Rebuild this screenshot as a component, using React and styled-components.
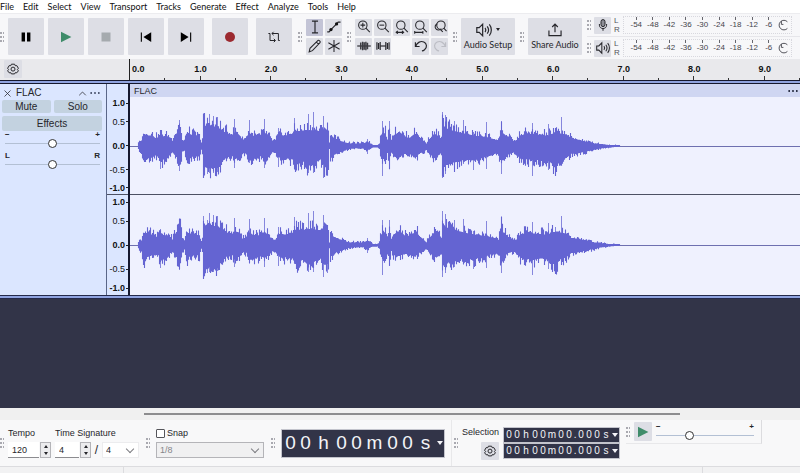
import React from 'react'
import styled, { createGlobalStyle } from 'styled-components'

const menuItems = [
  'File',
  'Edit',
  'Select',
  'View',
  'Transport',
  'Tracks',
  'Generate',
  'Effect',
  'Analyze',
  'Tools',
  'Help',
]
const seconds = ['1.0', '2.0', '3.0', '4.0', '5.0', '6.0', '7.0', '8.0', '9.0']
const levels = ['-54', '-48', '-42', '-36', '-30', '-24', '-18', '-12', '-6']
const amplitudes = ['1.0', '0.5', '0.0', '-0.5', '-1.0']

// [x, height above the zero line, height below it]
const envelope = [
  [8, 3, 3], [9, 6, 6], [11, 5, 7], [13, 14, 17], [15, 13, 18], [17, 12, 14],
  [22, 12, 12], [25, 9, 10], [28, 10, 12], [30, 14, 18], [33, 11, 16],
  [37, 11, 14], [40, 9, 9], [42, 6, 6], [44, 12, 10], [46, 14, 10],
  [48, 23, 23], [50, 21, 22], [52, 6, 6], [54, 5, 5], [56, 14, 17],
  [60, 13, 13], [66, 12, 12], [69, 10, 12], [71, 4, 4], [72, 8, 8],
  [73, 27, 29], [75, 22, 25], [78, 25, 27], [82, 22, 27], [88, 21, 25],
  [92, 17, 18], [97, 14, 13], [102, 13, 12], [105, 16, 15], [109, 12, 14],
  [112, 7, 7], [116, 9, 9], [118, 15, 18], [122, 12, 14], [126, 11, 16],
  [130, 11, 12], [134, 15, 16], [138, 11, 12], [142, 6, 7], [145, 6, 7],
  [148, 12, 12], [152, 12, 16], [156, 12, 14], [162, 14, 16], [166, 17, 22],
  [172, 17, 18], [178, 18, 24], [184, 18, 20], [190, 16, 16], [194, 20, 24],
  [198, 17, 22], [199, 3, 3], [200, 12, 14], [202, 10, 12], [206, 8, 8],
  [212, 5, 6], [218, 3, 3], [225, 3, 2], [233, 3, 2], [237, 5, 5],
  [240, 3, 2], [243, 1, 1], [247, 1, 1], [249, 3, 3], [250, 9, 10],
  [252, 15, 15], [255, 14, 16], [257, 7, 7], [259, 20, 18], [261, 7, 6],
  [263, 12, 12], [269, 16, 13], [274, 11, 9], [279, 9, 9], [282, 12, 11],
  [286, 14, 12], [290, 9, 8], [293, 6, 6], [296, 3, 4], [299, 8, 9],
  [304, 14, 14], [308, 11, 10], [311, 8, 8], [312, 28, 28], [314, 21, 20],
  [320, 18, 21], [328, 16, 18], [334, 14, 16], [342, 12, 17], [350, 11, 15],
  [357, 10, 12], [362, 8, 10], [368, 6, 8], [371, 20, 20], [373, 14, 14],
  [378, 9, 9], [383, 6, 7], [386, 6, 10], [390, 12, 15], [398, 14, 16],
  [404, 13, 17], [412, 12, 16], [418, 12, 18], [425, 15, 24], [430, 14, 17],
  [436, 13, 14], [441, 8, 9], [448, 7, 8], [456, 5, 6], [464, 3, 4],
  [472, 2, 2], [480, 1, 1], [490, 1, 0],
]
const peaks = [
  [30, 16, 23], [49, 26, 25], [73, 29, 31], [77, 25, 28], [79, 32, 27],
  [83, 30, 27], [87, 29, 26], [104, 27, 22], [119, 26, 17], [134, 27, 22],
  [148, 18, 21], [164, 28, 19], [178, 32, 27], [183, 34, 27], [193, 30, 32],
  [197, 20, 28], [237, 7, 8], [252, 25, 30], [259, 25, 21], [312, 34, 32],
  [315, 31, 28], [324, 25, 22], [333, 26, 18], [343, 14, 24], [356, 24, 23],
  [371, 25, 28], [402, 23, 30], [418, 22, 24], [425, 18, 29], [431, 29, 18],
]

const noise = (x, seed) => {
  const n = Math.sin(x * 12.9898 + seed * 78.233) * 43758.5453
  return n - Math.floor(n)
}

const buildWave = (seed) => {
  let path = ''
  for (let i = 0; i < envelope.length - 1; i++) {
    const [x1, up1, down1] = envelope[i]
    const [x2, up2, down2] = envelope[i + 1]
    for (let x = x1; x < x2; x++) {
      const t = (x - x1) / (x2 - x1)
      const up = up1 + (up2 - up1) * t
      const down = down1 + (down2 - down1) * t
      const top = up * (0.88 + noise(x, seed) ** 3 * 0.6)
      const bottom = down * (0.8 + noise(x, seed + 1) ** 2 * 0.5)
      path += `M${x + 0.5} ${(50 - top).toFixed(1)}V${(50.6 + bottom).toFixed(1)}`
    }
  }
  return path
}
const peakPath = peaks
  .map(([x, up, down]) => `M${x + 0.5} ${50 - up}V${50 + down}`)
  .join('')

const Icon = ({ size = 12, children, ...rest }) => (
  <svg
    width={size}
    height={size}
    viewBox='0 0 12 12'
    fill='none'
    stroke='#26262b'
    strokeWidth='1'
    aria-hidden='true'
    {...rest}
  >
    {children}
  </svg>
)

const PauseIcon = () => (
  <Icon fill='#000' stroke='none'>
    <path d='M1.6 1.5h3.4v9H1.6zM7 1.5h3.4v9H7z' />
  </Icon>
)
const PlayIcon = ({ size }) => (
  <Icon size={size} fill='#3f8c6a' stroke='none'>
    <path d='M1 .8v10.4L11.4 6z' />
  </Icon>
)
const StopIcon = () => (
  <Icon fill='#a5aaae' stroke='none'>
    <path d='M1.5 1.5h9v9h-9z' />
  </Icon>
)
const StartIcon = () => (
  <Icon fill='#000' stroke='none'>
    <path d='M.8 1.4h1.1v9.4H.8zM11.2 1.2v9.8L3.4 6z' />
  </Icon>
)
const EndIcon = () => (
  <Icon fill='#000' stroke='none'>
    <path d='M10.1 1.4h1.1v9.4h-1.1zM.8 1.2v9.8L8.6 6z' />
  </Icon>
)
const RecordIcon = () => (
  <Icon fill='#9c2a30' stroke='none'>
    <circle cx='6' cy='6' r='5' />
  </Icon>
)
const LoopIcon = () => (
  <Icon>
    <path d='M.4 2.5h1.6v7h5M4 2.5h6.4v7h1.4' />
    <path d='M5.6.8 3.9 2.5l1.7 1.7M5.8 7.8l1.7 1.7-1.7 1.7' />
  </Icon>
)
const CursorIcon = () => (
  <Icon size={14}>
    <path d='M3.4 1h5.2M6 1v10M3.4 11h5.2' />
  </Icon>
)
const EnvelopeIcon = () => (
  <Icon size={14}>
    <path d='M.2 10.2h1.6L3.6 8 8 3.6l1.6-1.8h2' />
    <circle cx='3.4' cy='8.2' r='1.4' fill='#111' stroke='none' />
    <circle cx='8.2' cy='3.4' r='1.4' fill='#111' stroke='none' />
  </Icon>
)
const PencilIcon = () => (
  <Icon size={14} strokeWidth='.9'>
    <path d='M1 11l.7-3L8.4 1.3c.9-.8 2.7.9 1.9 1.9L3.8 10zM7.2 2.6l1.9 1.9' />
  </Icon>
)
const StarIcon = () => (
  <Icon size={14} strokeWidth='.9'>
    <path d='M6 .8v10.4M1.2 3.2l9.6 5.6M10.8 3.2 1.2 8.8' />
  </Icon>
)
const ZoomIcon = ({ kind }) => (
  <Icon size={14} strokeWidth='.9'>
    {kind === 'toggle' && <path d='M3.6 3.2a2.8 2.8 0 1 0 3 4.6' />}
    <circle cx={kind === 'toggle' ? 6.8 : 5} cy='4.4' r='3.6' />
    <path d={kind === 'toggle' ? 'M9.2 7l2.4 2.6M6.4 8.2l2 2' : 'M7.6 7l3.4 3.4'} />
    {kind === 'in' && <path d='M3 4.4h4M5 2.4v4' />}
    {kind === 'out' && <path d='M3 4.4h4' />}
    {kind === 'selection' && (
      <path d='M1 10.6h6.4M2.4 9.4 1 10.6l1.4 1.2M6 9.4l1.4 1.2L6 11.8' />
    )}
    {kind === 'fit' && <path d='M.6 10.6h7M.6 9.4v2.4M7.6 9.4v2.4' />}
  </Icon>
)
const TrimIcon = () => (
  <Icon size={14}>
    <path d='M.2 6h11.6' />
    <path d='M3.2 3v6M4.8 2.4v7.2M6.2 2.8v6.4M7.6 2.4v7.2M9 3.2v5.6' stroke='#3c3c42' strokeWidth='1.2' />
  </Icon>
)
const SilenceIcon = () => (
  <Icon size={14}>
    <path d='M3.6 6h4.8' />
    <path d='M.8 2.8v6.4M2.2 3.4v5.2M3.6 2.6v6.8M8.4 2.6v6.8M9.8 3.4v5.2M11.2 2.8v6.4' />
  </Icon>
)
const UndoIcon = ({ color = '#26262b', flip }) => (
  <Icon size={14} stroke={color}>
    <g transform={flip ? 'matrix(-1 0 0 1 12 0)' : undefined}>
      <path d='M1.2 2.8v3.6h3.6M1.4 6.2C2.8 2.8 5.8 1.4 8.4 2.6c2.6 1.2 3.2 4.6.6 6.6-.6.6-1.4.9-2.2 1' />
    </g>
  </Icon>
)
const SpeakerIcon = ({ size = 14 }) => (
  <Icon size={size} strokeWidth='.9'>
    <path d='M.6 4.2v3.6h1.8l2.6 2.6V1.6L2.4 4.2zM6.8 4.4c.6.8.6 2.4 0 3.2M8.4 3.2c1.2 1.6 1.2 4 0 5.6M10 1.8c2 2.4 2 6 0 8.4' />
  </Icon>
)
const ShareIcon = () => (
  <Icon size={14}>
    <path d='M.8 6.4v4.4h10.4V6.4M6 8V1M3.6 3.4 6 1l2.4 2.4' />
  </Icon>
)
const MicIcon = () => (
  <Icon>
    <rect x='4' y='.6' width='4' height='7' rx='2' fill='#8d8e96' />
    <path d='M2.4 5v1.2c0 4.4 7.2 4.4 7.2 0V5M6 9.4v2.4' />
  </Icon>
)
const GearIcon = () => (
  <Icon>
    <path d='M4.4 1.2h3.2l.6 1.5 1.6-.1 1.6 2.7-1 1.2 1 1.3-1.6 2-1.6-.1-.6 1.2H4.4l-.6-1.2-1.6.1-1.6-2 1-1.3-1-1.2 1.6-2.7 1.6.1z' />
    <circle cx='6' cy='6.1' r='2' />
  </Icon>
)
const CloseIcon = () => (
  <Icon size={9}>
    <path d='M2 2l8 8M10 2l-8 8' />
  </Icon>
)
const CollapseIcon = () => (
  <Icon size={9}>
    <path d='M1.6 8.4 6 4l4.4 4.4' />
  </Icon>
)
const DotsIcon = ({ color = '#3b4560' }) => (
  <Icon size={10} fill={color} stroke='none'>
    <circle cx='1.4' cy='6' r='1.1' />
    <circle cx='6' cy='6' r='1.1' />
    <circle cx='10.6' cy='6' r='1.1' />
  </Icon>
)
const RingIcon = () => (
  <Icon stroke='#55555c'>
    <path d='M10.4 2.8A4.8 4.8 0 1 0 10.4 9.4M4.4 2v3.4h2' />
  </Icon>
)

const Waveform = ({ seed }) => (
  <Wave viewBox='0 0 670 100' preserveAspectRatio='none' role='img' aria-label='Waveform'>
    <path d='M0 50.5H670' stroke='#6e70b0' />
    <path d={peakPath} stroke='#6464d2' opacity='0.75' />
    <path d={buildWave(seed)} stroke='#6464d2' strokeWidth='1.1' />
  </Wave>
)

const TimeText = ({ value, large }) => (
  <TimeBox $large={large}>
    {value.split('').map((char, index) => (
      <TimeCell key={index} $large={large} $char={char}>
        {char}
      </TimeCell>
    ))}
    <TimeMenu type='button' aria-label='Time format'>
      <Arrow />
    </TimeMenu>
  </TimeBox>
)

const Meter = ({ label, icon }) => (
  <MeterRow>
    <Grip />
    <ToolButton type='button' aria-label={label}>
      {icon}
    </ToolButton>
    <Channels>
      <span>L</span>
      <span>R</span>
    </Channels>
    <Scale>
      {levels.map((level) => (
        <Level key={level}>{level}</Level>
      ))}
      <LevelEnd>
        <RingIcon />
      </LevelEnd>
    </Scale>
  </MeterRow>
)

const Spinner = ({ id, value, width }) => (
  <SpinBox>
    <NumberInput id={id} defaultValue={value} $width={width} />
    <SpinButtons>
      <button type='button' aria-label='Increase'>
        <Arrow $up />
      </button>
      <button type='button' aria-label='Decrease'>
        <Arrow />
      </button>
    </SpinButtons>
  </SpinBox>
)

const App = () => {
  return (
    <Page>
      <GlobalStyle />
      <Menu>
        {menuItems.map((item) => (
          <button type='button' key={item}>
            {item}
          </button>
        ))}
      </Menu>

      <Toolbar>
        <Group>
          <Grip />
          <Transport>
            <BigButton type='button' aria-label='Pause'><PauseIcon /></BigButton>
            <BigButton type='button' aria-label='Play'><PlayIcon /></BigButton>
            <BigButton type='button' aria-label='Stop'><StopIcon /></BigButton>
            <BigButton type='button' aria-label='Skip to start'><StartIcon /></BigButton>
            <BigButton type='button' aria-label='Skip to end'><EndIcon /></BigButton>
            <BigButton type='button' aria-label='Record' $apart><RecordIcon /></BigButton>
            <BigButton type='button' aria-label='Loop' $apart><LoopIcon /></BigButton>
          </Transport>
        </Group>
        <Group>
          <Grip />
          <ToolGrid $columns={2}>
            <ToolButton type='button' aria-label='Selection tool' $active><CursorIcon /></ToolButton>
            <ToolButton type='button' aria-label='Envelope tool'><EnvelopeIcon /></ToolButton>
            <ToolButton type='button' aria-label='Draw tool'><PencilIcon /></ToolButton>
            <ToolButton type='button' aria-label='Multi-tool'><StarIcon /></ToolButton>
          </ToolGrid>
        </Group>
        <Group>
          <Grip />
          <ToolGrid $columns={5}>
            <ToolButton type='button' aria-label='Zoom in'><ZoomIcon kind='in' /></ToolButton>
            <ToolButton type='button' aria-label='Zoom out'><ZoomIcon kind='out' /></ToolButton>
            <ToolButton type='button' aria-label='Fit selection'><ZoomIcon kind='selection' /></ToolButton>
            <ToolButton type='button' aria-label='Fit project'><ZoomIcon kind='fit' /></ToolButton>
            <ToolButton type='button' aria-label='Zoom toggle'><ZoomIcon kind='toggle' /></ToolButton>
            <ToolButton type='button' aria-label='Trim audio'><TrimIcon /></ToolButton>
            <ToolButton type='button' aria-label='Silence audio'><SilenceIcon /></ToolButton>
            <span />
            <ToolButton type='button' aria-label='Undo'><UndoIcon /></ToolButton>
            <ToolButton type='button' aria-label='Redo'><UndoIcon flip color='#bcbdc4' /></ToolButton>
          </ToolGrid>
        </Group>
        <Group>
          <Grip />
          <LabelButton type='button'>
            <IconLine>
              <SpeakerIcon size={16} />
              <Arrow />
            </IconLine>
            Audio Setup
          </LabelButton>
        </Group>
        <Group>
          <Grip />
          <LabelButton type='button'>
            <IconLine>
              <ShareIcon />
            </IconLine>
            Share Audio
          </LabelButton>
        </Group>
        <Meters>
          <Meter label='Record meter' icon={<MicIcon />} />
          <Meter label='Playback meter' icon={<SpeakerIcon />} />
        </Meters>
      </Toolbar>

      <Timeline>
        <TimelineOptions>
          <OptionsButton type='button' aria-label='Timeline options'>
            <GearIcon />
          </OptionsButton>
        </TimelineOptions>
        <TimeRuler>
          <RulerLabels>
            <span>0.0</span>
            {seconds.map((second) => (
              <RulerLabel key={second}>{second}</RulerLabel>
            ))}
          </RulerLabels>
          <RulerTicks>
            {Array.from({ length: 19 }, (_, index) => (
              <Tick key={index} $major={index % 2 === 1} />
            ))}
          </RulerTicks>
        </TimeRuler>
      </Timeline>

      <Track>
        <TrackPanel>
          <TrackTitle>
            <IconButton type='button' aria-label='Close track'><CloseIcon /></IconButton>
            <TrackName>FLAC</TrackName>
            <IconButton type='button' aria-label='Collapse track'><CollapseIcon /></IconButton>
            <IconButton type='button' aria-label='Track menu'><DotsIcon /></IconButton>
          </TrackTitle>
          <TrackButtons>
            <TrackButton type='button'>Mute</TrackButton>
            <TrackButton type='button'>Solo</TrackButton>
            <TrackButton type='button' $wide>Effects</TrackButton>
          </TrackButtons>
          <SliderBox>
            <SliderEnds>
              <span>−</span>
              <span>+</span>
            </SliderEnds>
            <Slider type='range' aria-label='Gain' defaultValue='50' />
          </SliderBox>
          <SliderBox>
            <SliderEnds>
              <span>L</span>
              <span>R</span>
            </SliderEnds>
            <Slider type='range' aria-label='Pan' defaultValue='50' />
          </SliderBox>
        </TrackPanel>
        <AmplitudeRulers>
          {[97, 101].map((height) => (
            <Amplitude key={height} $height={height}>
              {amplitudes.map((amplitude) => (
                <AmplitudeLabel key={amplitude} $minor={amplitude.endsWith('.5')}>
                  {amplitude}
                </AmplitudeLabel>
              ))}
            </Amplitude>
          ))}
        </AmplitudeRulers>
        <Clip>
          <ClipTitle>
            FLAC
            <IconButton type='button' aria-label='Clip menu'><DotsIcon color='#11162b' /></IconButton>
          </ClipTitle>
          <Channel $height={97}>
            <Waveform seed={3} />
          </Channel>
          <Channel $height={101}>
            <Waveform seed={8} />
          </Channel>
        </Clip>
      </Track>

      <Canvas />
      <ScrollArea>
        <span />
        <ScrollThumb />
        <span />
      </ScrollArea>

      <BottomBar>
        <Grip />
        <Field>
          <label htmlFor='tempo'>Tempo</label>
          <Spinner id='tempo' value='120' width={31} />
        </Field>
        <Field>
          <label htmlFor='upper'>Time Signature</label>
          <FieldRow>
            <Spinner id='upper' value='4' width={24} />
            <Slash>/</Slash>
            <SelectBox $width={37}>
              <select aria-label='Lower time signature' defaultValue='4'>
                <option>4</option>
              </select>
            </SelectBox>
          </FieldRow>
        </Field>
        <BottomGroup>
          <Grip />
          <Field>
            <SnapLabel>
              <input type='checkbox' />
              Snap
            </SnapLabel>
            <SelectBox $width={108} $disabled>
              <select aria-label='Snap to' defaultValue='1/8' disabled>
                <option>1/8</option>
              </select>
            </SelectBox>
          </Field>
        </BottomGroup>
        <BottomGroup>
          <Grip />
          <ClockBox>
            <TimeText value='00h00m00s' large />
          </ClockBox>
        </BottomGroup>
        <SelectionGroup>
          <Grip />
          <SelectionHead>
            Selection
            <OptionsButton type='button' aria-label='Selection options'>
              <GearIcon />
            </OptionsButton>
          </SelectionHead>
          <SelectionTimes>
            <TimeText value='00h00m00.000s' />
            <TimeText value='00h00m00.000s' />
          </SelectionTimes>
        </SelectionGroup>
        <SpeedGroup>
          <Grip />
          <SpeedButton type='button' aria-label='Play at speed'>
            <PlayIcon />
          </SpeedButton>
          <SpeedSlider>
            <SliderEnds>
              <span>−</span>
              <span>+</span>
            </SliderEnds>
            <Slider type='range' aria-label='Playback speed' defaultValue='32' />
          </SpeedSlider>
        </SpeedGroup>
      </BottomBar>
      <StatusBar>
        <span />
        <span />
      </StatusBar>
    </Page>
  )
}

const GlobalStyle = createGlobalStyle`
  * {
    box-sizing: border-box;
  }
  body {
    margin: 0;
  }
  button, input, select {
    margin: 0;
    padding: 0;
    border: 0;
    border-radius: 0;
    background: none;
    color: inherit;
    font: inherit;
  }
  svg {
    display: block;
    flex: none;
  }
`

const Page = styled.main`
  display: flex;
  flex-direction: column;
  min-height: 100vh;
  overflow: hidden;
  background: #f7f7f9;
  color: #26262b;
  font-family: 'Liberation Sans', Arial, sans-serif;
  font-size: 9px;
  line-height: 10px;
`

const Menu = styled.nav`
  display: flex;
  gap: 9px;
  height: 13px;
  background: #fff;
  color: #111;
  font-family: Lato, sans-serif;
  font-size: 9px;
  line-height: 12px;
`

const Toolbar = styled.div`
  display: flex;
  gap: 5px;
  height: 46px;
  border-top: 1px solid #ececef;
`

const Group = styled.div`
  display: flex;
  align-items: center;
  gap: 4px;
`

const Grip = styled.span`
  flex: none;
  width: 4px;
  height: 10px;
  background: radial-gradient(circle at 1px 1px, #a9a9b0 1px, transparent 1px);
  background-size: 3px 4px;
`

const Transport = styled.div`
  display: flex;
  gap: 4px;
  padding-right: 1px;
`

const Button = styled.button`
  display: flex;
  align-items: center;
  justify-content: center;
  background: #dddee5;
  border-radius: 1px;
`

const BigButton = styled(Button)`
  width: 36px;
  height: 37px;
  margin-left: ${(props) => (props.$apart ? '4px' : '0')};
`

const ToolGrid = styled.div`
  display: grid;
  grid-template-columns: repeat(${(props) => props.$columns}, 17px);
  gap: 2px;
`

const ToolButton = styled(Button)`
  flex: none;
  width: 17px;
  height: 17px;
  background: ${(props) => (props.$active ? '#c3c4d6' : '#dddee5')};
`

const LabelButton = styled(Button)`
  flex-direction: column;
  gap: 2px;
  width: 54px;
  height: 37px;
  padding-bottom: 2px;
  font-family: Lato, sans-serif;
  font-size: 9px;
  white-space: nowrap;
`

const IconLine = styled.span`
  display: flex;
  align-items: center;
  gap: 4px;
  height: 16px;
`

const Arrow = styled.i`
  border: 2px solid transparent;
  border-top: 3px solid currentColor;
  border-bottom: 0;
  transform: ${(props) => (props.$up ? 'rotate(180deg)' : 'none')};
`

const Meters = styled.div`
  display: flex;
  flex: 1;
  flex-direction: column;
`

const MeterRow = styled.div`
  display: flex;
  flex: 1;
  align-items: center;
  gap: 3px;
  padding-right: 8px;

  & + & {
    border-top: 1px solid #e6e6ea;
  }
`

const Channels = styled.span`
  display: flex;
  flex-direction: column;
  width: 6px;
  color: #55555c;
  font-size: 8px;
  line-height: 9px;
`

const Scale = styled.div`
  display: grid;
  flex: 1;
  grid-template-columns: repeat(9, 1fr) 14px;
  height: 18px;
  padding-left: 4px;
  border: 1px dotted #d8d8de;
  color: #44444b;
  font-size: 8px;
  line-height: 10px;
`

const Level = styled.span`
  padding-top: 3px;
  background: linear-gradient(#66666c, #66666c) top center / 1px 3px no-repeat;
  text-align: center;
`

const LevelEnd = styled.span`
  display: flex;
  align-items: center;
`

const Timeline = styled.div`
  display: flex;
  height: 21px;
  background: #e9e9ec;
`

const TimelineOptions = styled.div`
  width: 130px;
  padding: 1px 4px;
  border-right: 1px solid #222;
`

const OptionsButton = styled(Button)`
  width: 18px;
  height: 18px;
`

const TimeRuler = styled.div`
  display: flex;
  flex: 1;
  flex-direction: column;
  justify-content: space-between;
  padding-top: 5px;
`

const RulerLabels = styled.div`
  display: grid;
  grid-template-columns: repeat(19, 1fr);
  color: #111;
  font-weight: bold;

  span:first-child {
    padding-left: 2px;
  }
`

const RulerLabel = styled.span`
  grid-column: span 2;
  text-align: center;
`

const RulerTicks = styled.div`
  display: grid;
  grid-template-columns: repeat(19, 1fr);
  align-items: end;
`

const Tick = styled.i`
  height: ${(props) => (props.$major ? '4px' : '2px')};
  border-right: 1px solid #333;
`

const Track = styled.section`
  display: flex;
  border-top: 4px double #15182e;
  border-bottom: 4px double #24294a;
  background: #8fa3e0;
`

const TrackPanel = styled.div`
  width: 107px;
  padding: 2px 4px 0 2px;
  border-right: 1px solid #5a6688;
  background: #dbe6ff;
`

const TrackTitle = styled.div`
  display: flex;
  align-items: center;
  height: 14px;
  padding-left: 1px;
`

const TrackName = styled.span`
  flex: 1;
  padding-left: 1px;
  font-size: 10px;
`

const IconButton = styled.button`
  display: flex;
  align-items: center;
  width: 12px;
  height: 10px;
`

const TrackButtons = styled.div`
  display: grid;
  grid-template-columns: 1fr 1fr;
  gap: 3px;
`

const TrackButton = styled(Button)`
  grid-column: span ${(props) => (props.$wide ? 2 : 1)};
  height: ${(props) => (props.$wide ? '15px' : '13px')};
  background: #c3d2e0;
  border-radius: 2px;
  font-size: 10px;
`

const SliderBox = styled.div`
  height: 21px;
  padding: 0 2px 0 3px;
`

const SliderEnds = styled.div`
  display: flex;
  justify-content: space-between;
  font-size: 8px;
  font-weight: bold;
  line-height: 8px;
`

const Slider = styled.input`
  display: block;
  width: 100%;
  height: 9px;
  appearance: none;
  background: linear-gradient(#b3c0d4, #b3c0d4) center / 100% 1px no-repeat;

  &::-webkit-slider-thumb {
    width: 9px;
    height: 9px;
    appearance: none;
    border: 1px solid #333;
    border-radius: 50%;
    background: #fff;
  }
`

const AmplitudeRulers = styled.div`
  width: 23px;
  padding-top: 13px;
  border-right: 2px solid #15182e;
  background: #dbe6ff;
`

const Amplitude = styled.div`
  display: grid;
  grid-template-rows: 1fr 24px 24px 24px 1fr;
  align-items: center;
  height: ${(props) => props.$height}px;
  color: #111;

  & + & {
    border-top: 1px solid #4d5163;
  }
`

const AmplitudeLabel = styled.span`
  padding-right: 3px;
  background: linear-gradient(#222, #222) right center / 2px 1px no-repeat;
  font-weight: ${(props) => (props.$minor ? 'normal' : 'bold')};
  text-align: right;
`

const Clip = styled.div`
  flex: 1;
  min-width: 0;
  background: #eff1fe;
`

const ClipTitle = styled.div`
  display: flex;
  align-items: center;
  justify-content: space-between;
  height: 13px;
  padding-left: 4px;
  background: #cfd6f2;
`

const Channel = styled.div`
  display: flex;
  align-items: center;
  height: ${(props) => props.$height}px;

  & + & {
    border-top: 1px solid #4d5163;
  }
`

const Wave = styled.svg`
  width: 100%;
  height: 100px;
  margin: -2px 0;
`

const Canvas = styled.div`
  flex: 1;
  background: #323448;
`

const ScrollArea = styled.div`
  display: grid;
  grid-template-columns: 18fr 67fr 15fr;
  align-items: center;
  height: 12px;
  background: #f0f0f0;
`

const ScrollThumb = styled.div`
  height: 2px;
  background: #8c8c8e;
`

const BottomBar = styled.div`
  display: flex;
  align-items: center;
  gap: 4px;
  height: 47px;
  background: #f8f8f9;
  border-bottom: 1px solid #dcdcdf;
`

const BottomGroup = styled(Group)`
  gap: 6px;
  margin-left: 3px;
`

const Field = styled.div`
  display: flex;
  flex-direction: column;
  gap: 4px;
`

const FieldRow = styled.div`
  display: flex;
  align-items: center;
`

const SpinBox = styled.div`
  display: flex;
  gap: 1px;
`

const NumberInput = styled.input`
  width: ${(props) => props.$width}px;
  height: 16px;
  padding-left: 4px;
  border-bottom: 1px solid #8c8c90;
  background: #fff;
`

const SpinButtons = styled.span`
  display: flex;
  flex-direction: column;
  width: 11px;
  border: 1px solid #b4b4b8;

  button {
    display: flex;
    flex: 1;
    align-items: center;
    justify-content: center;
    background: #ececee;
  }
`

const Slash = styled.span`
  width: 11px;
  font-size: 12px;
  text-align: center;
`

const SelectBox = styled.div`
  display: flex;
  align-items: center;
  width: ${(props) => props.$width}px;
  height: 16px;
  border: 1px solid ${(props) => (props.$disabled ? '#b4b4b8' : '#ececee')};
  background: ${(props) => (props.$disabled ? '#f0f0f1' : '#fff')};
  color: ${(props) => (props.$disabled ? '#85858a' : '#26262b')};

  select {
    flex: 1;
    padding-left: 3px;
    appearance: none;
    opacity: 1;
  }
  &::after {
    width: 5px;
    height: 5px;
    margin: 0 5px 2px 0;
    border: solid #7d7d82;
    border-width: 0 1px 1px 0;
    transform: rotate(45deg);
    content: '';
  }
`

const SnapLabel = styled.label`
  display: flex;
  align-items: center;
  gap: 2px;

  input {
    width: 9px;
    height: 9px;
    appearance: none;
    border: 1px solid #55555a;
    border-radius: 1px;
    background: #fff;
  }
`

const ClockBox = styled.div`
  height: 29px;
  border: 1px solid #c3c4cc;
`

const TimeBox = styled.div`
  display: flex;
  align-items: center;
  height: ${(props) => (props.$large ? '27px' : '14px')};
  padding-left: 1px;
  background: #323448;
  color: #f4f4f8;
  font-size: ${(props) => (props.$large ? '19px' : '10px')};
`

const cellWidth = (char, large) => {
  if (char === '.') return 4
  if (char === '0') return large ? 15 : 8
  return large ? 21 : 10
}

const TimeCell = styled.span`
  width: ${(props) => cellWidth(props.$char, props.$large)}px;
  text-align: center;
`

const TimeMenu = styled.button`
  display: flex;
  justify-content: center;
  width: 8px;

  i {
    border-width: 4px 3px 0;
  }
`

const SelectionGroup = styled(Group)`
  height: 46px;
  margin-left: 2px;
  padding-left: 2px;
  border-left: 1px solid #e8e8ea;
`

const SelectionHead = styled.div`
  display: flex;
  flex-direction: column;
  align-items: flex-end;
  gap: 5px;
`

const SelectionTimes = styled.div`
  display: flex;
  flex-direction: column;
  gap: 2px;
  border: 1px solid #c3c4cc;
  background: #c3c4cc;
`

const SpeedGroup = styled(Group)`
  align-self: flex-start;
  height: 24px;
  margin-left: 2px;
  padding-right: 7px;
  border-right: 1px solid #dcdcdf;
  border-bottom: 1px solid #e8e8ea;
`

const SpeedButton = styled(Button)`
  width: 18px;
  height: 19px;
`

const SpeedSlider = styled.div`
  width: 98px;
`

const StatusBar = styled.footer`
  display: grid;
  grid-template-columns: 124px 579px;
  height: 6px;
  background: #f2f2f3;

  span {
    border-right: 1px solid #dcdcdf;
  }
`

export default App
